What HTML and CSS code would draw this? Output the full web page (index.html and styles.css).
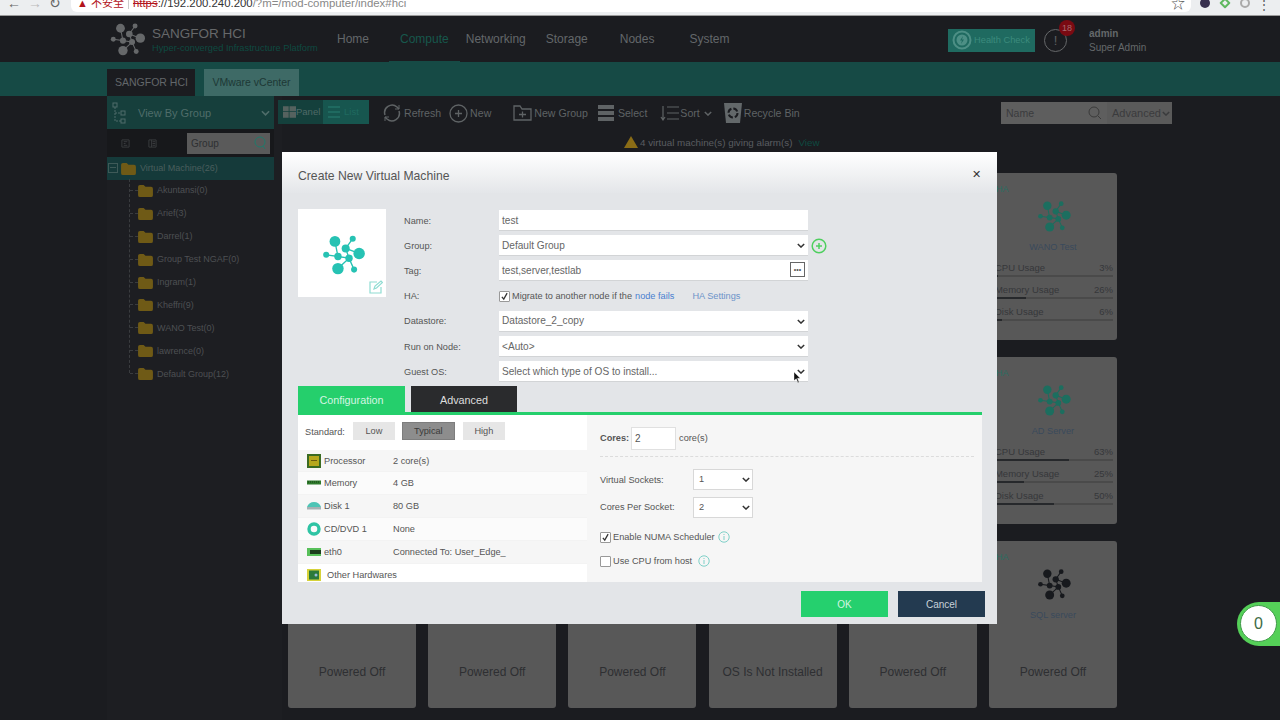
FILE: index.html
```html
<!DOCTYPE html>
<html lang="en">
<head>
    <meta charset="UTF-8">
    <title>SANGFOR HCI</title>
    <link rel="stylesheet" href="styles.css">
</head>
<body>
    <svg class="defs" width="0" height="0">
        <symbol id="logo" viewBox="0 0 127 122">
            <g stroke="currentColor" stroke-width="4" fill="none">
                <path d="M38 22L47 67L12 62M47 67L80 72L47 103M80 72L95 106M91 14L70 43L110 58M70 43L80 72"/>
            </g>
            <g fill="currentColor">
                <circle cx="38" cy="22" r="16"/><circle cx="91" cy="14" r="9"/><circle cx="70" cy="43" r="12"/>
                <circle cx="110" cy="58" r="17"/><circle cx="12" cy="62" r="9"/><circle cx="47" cy="67" r="11"/>
                <circle cx="80" cy="72" r="11"/><circle cx="47" cy="103" r="17"/><circle cx="95" cy="106" r="9"/>
            </g>
        </symbol>
        <symbol id="chev" viewBox="0 0 10 6">
            <path d="M1 1l4 4 4-4" fill="none" stroke="currentColor" stroke-width="1.8"/>
        </symbol>
        <symbol id="folder" viewBox="0 0 16 14">
            <path d="M0 3q0-2 2-2h4l2 2h6q2 0 2 2v7q0 2-2 2H2q-2 0-2-2z" fill="currentColor"/>
        </symbol>
        <symbol id="tick" viewBox="0 0 12 12">
            <path d="M2.5 6.5l2.5 3 4.5-8" fill="none" stroke="#333" stroke-width="1.7"/>
        </symbol>
        <symbol id="info" viewBox="0 0 12 12">
            <circle cx="6" cy="6" r="5.2" fill="none" stroke="currentColor"/>
            <path d="M6 3v1M6 5v4" stroke="currentColor"/>
        </symbol>
    </svg>

    <div class="browser-bar">
        <div class="nav-glyphs">
            <span>&#8592;</span>
            <span class="off">&#8594;</span>
            <span>&#8635;</span>
        </div>
        <div class="omnibox">
            <span class="warn">&#9650; 不安全</span>
            <span class="sep"></span>
            <span class="url"><s>https</s>://192.200.240.200<em>/?m=/mod-computer/index#hci</em></span>
            <span class="star">&#9734;</span>
        </div>
        <div class="ext">
            <span class="ext-a"></span>
            <span class="ext-b"></span>
            <span class="ext-c"></span>
            <span class="ext-d">&#8942;</span>
        </div>
    </div>

    <header class="topbar">
        <svg class="top-logo"><use href="#logo"/></svg>
        <div class="brand">
            <div class="brand-name">SANGFOR HCI</div>
            <div class="brand-sub">Hyper-converged Infrastructure Platform</div>
        </div>
        <nav class="mainnav">
            <a class="nav-home">Home</a>
            <a class="nav-compute active">Compute</a>
            <a class="nav-network">Networking</a>
            <a class="nav-storage">Storage</a>
            <a class="nav-nodes">Nodes</a>
            <a class="nav-system">System</a>
        </nav>
        <div class="top-right">
            <div class="health">
                <svg width="20" height="20" viewBox="0 0 20 20">
                    <circle cx="10" cy="10" r="8.5" fill="none" stroke="#4d8f85" stroke-width="2"/>
                    <circle cx="10" cy="10" r="5.5" fill="#4d8f85"/>
                    <path d="M11 6l-3 4.5h2L9 14l3-4.5h-2z" fill="#1f6a60"/>
                </svg>
                Health Check
            </div>
            <div class="alarm">!<span class="badge">18</span></div>
            <div class="user">
                <b>admin</b>
                <span>Super Admin</span>
            </div>
        </div>
    </header>

    <div class="band">
        <div class="tab on">SANGFOR HCI</div>
        <div class="tab">VMware vCenter</div>
    </div>

    <div class="workspace">
        <aside class="sidebar">
            <div class="viewby">
                <svg width="14" height="22" viewBox="0 0 14 22" fill="none" stroke="#4f6d6a">
                    <rect x="1" y="1" width="4" height="4"/><rect x="9" y="9" width="4" height="4"/><rect x="9" y="17" width="4" height="4"/>
                    <path d="M3 5v14h6M3 11h6" stroke-dasharray="2 1"/>
                </svg>
                <span>View By Group</span>
                <svg class="chev-s"><use href="#chev"/></svg>
            </div>
            <div class="side-tools">
                <svg class="mini" viewBox="0 0 10 10" fill="none" stroke="#3c3e41"><path d="M1 1h8v8H1zM3 3h4M3 5h2M3 7h4"/></svg>
                <svg class="mini" viewBox="0 0 10 10" fill="none" stroke="#3c3e41"><path d="M1 1h8v8H1zM4 1v8M5 3h3M5 5h3M5 7h3"/></svg>
                <div class="side-search">
                    Group
                    <svg width="12" height="14" viewBox="0 0 12 14" fill="none" stroke="#1f7a6b"><circle cx="6" cy="6" r="5"/><path d="M9 10l2 3"/></svg>
                </div>
            </div>
            <div class="tree">
                <div class="tree-root">
                    <span class="minus"></span>
                    <svg class="fold"><use href="#folder"/></svg>
                    Virtual Machine(26)
                </div>
                <ul class="tree-list">
                    <li><svg class="fold"><use href="#folder"/></svg>Akuntansi(0)</li>
                    <li><svg class="fold"><use href="#folder"/></svg>Arief(3)</li>
                    <li><svg class="fold"><use href="#folder"/></svg>Darrel(1)</li>
                    <li><svg class="fold"><use href="#folder"/></svg>Group Test NGAF(0)</li>
                    <li><svg class="fold"><use href="#folder"/></svg>Ingram(1)</li>
                    <li><svg class="fold"><use href="#folder"/></svg>Kheffri(9)</li>
                    <li><svg class="fold"><use href="#folder"/></svg>WANO Test(0)</li>
                    <li><svg class="fold"><use href="#folder"/></svg>lawrence(0)</li>
                    <li><svg class="fold"><use href="#folder"/></svg>Default Group(12)</li>
                </ul>
            </div>
        </aside>

        <main class="main">
            <div class="toolbar">
                <div class="toggle">
                    <span class="tg-panel">
                        <svg width="13" height="12" viewBox="0 0 16 14" fill="#55625f"><path d="M0 0h7v6H0zM8 0h8v6H8zM0 7h7v7H0zM8 7h8v7H8z"/></svg>
                        Panel
                    </span>
                    <span class="tg-list">
                        <svg width="12" height="14" viewBox="0 0 12 14" fill="none" stroke="#1f6a60" stroke-width="2"><path d="M0 2h12M0 7h12M0 12h12"/></svg>
                        List
                    </span>
                </div>
                <div class="tools">
                    <span class="tool t-refresh">
                        <svg width="20" height="20" viewBox="0 0 20 20" fill="none" stroke="#5f6365" stroke-width="1.5"><path d="M3 12A7.5 7.5 0 0 1 15 4l2 2M17 8a7.5 7.5 0 0 1-12 8l-2-2"/><path d="M17 2v4h-4M3 18v-4h4" stroke-width="1"/></svg>
                        Refresh
                    </span>
                    <span class="tool t-new">
                        <svg width="19" height="19" viewBox="0 0 19 19" fill="none" stroke="#5f6365" stroke-width="1.3"><circle cx="9.5" cy="9.5" r="8.5"/><path d="M6 9.5h7M9.5 6v7"/></svg>
                        New
                    </span>
                    <span class="tool t-group">
                        <svg width="19" height="16" viewBox="0 0 19 16" fill="none" stroke="#5f6365" stroke-width="1.3"><path d="M1 15V1h6l2 3h9v11zM6 9.5h7M9.5 6.5v6"/></svg>
                        New Group
                    </span>
                    <span class="tool t-select">
                        <svg width="16" height="16" viewBox="0 0 16 16" fill="#5f6365"><path d="M0 0h16v4H0zM0 6h16v4H0zM0 12h16v4H0z"/></svg>
                        Select
                    </span>
                    <span class="tool t-sort">
                        <svg width="19" height="16" viewBox="0 0 19 16" fill="none" stroke="#5f6365" stroke-width="1.2"><path d="M3 1v13M1 12l2 3 2-3M7 2h12M7 8h12M7 14h12"/></svg>
                        Sort
                        <svg class="chev-t"><use href="#chev"/></svg>
                    </span>
                    <span class="tool t-bin">
                        <svg width="18" height="20" viewBox="0 0 18 20"><path d="M0 0h18l-2 20H2z" fill="#63686a"/><circle cx="9" cy="10" r="4.5" fill="none" stroke="#1b1c20" stroke-width="2" stroke-dasharray="5 2"/></svg>
                        Recycle Bin
                    </span>
                </div>
                <div class="search">
                    <div class="search-name">
                        Name
                        <svg width="14" height="14" viewBox="0 0 14 14" fill="none" stroke="#3a3a3a"><circle cx="6" cy="6" r="5"/><path d="M10 10l3 3"/></svg>
                    </div>
                    <div class="search-adv">Advanced<svg class="chev-a"><use href="#chev"/></svg></div>
                </div>
            </div>
            <div class="notice">
                <svg width="14" height="12" viewBox="0 0 14 12"><path d="M7 0l7 12H0z" fill="#8a6c16"/></svg>
                4 virtual machine(s) giving alarm(s)
                <a>View</a>
            </div>
            <div class="cards">
                <div class="card"></div><div class="card"></div><div class="card"></div><div class="card"></div><div class="card"></div>
                <div class="card vm">
                    <span class="ha">HA</span>
                    <svg class="vm-logo"><use href="#logo"/></svg>
                    <div class="vm-name">WANO Test</div>
                    <div class="usage"><div class="usage-row"><span>CPU Usage</span><span>3%</span></div><div class="bar"><i class="fill" style="width:3%"></i></div></div>
                    <div class="usage"><div class="usage-row"><span>Memory Usage</span><span>26%</span></div><div class="bar"><i class="fill" style="width:26%"></i></div></div>
                    <div class="usage"><div class="usage-row"><span>Disk Usage</span><span>6%</span></div><div class="bar"><i class="fill" style="width:6%"></i></div></div>
                </div>
                <div class="card"></div><div class="card"></div><div class="card"></div><div class="card"></div><div class="card"></div>
                <div class="card vm">
                    <span class="ha">HA</span>
                    <svg class="vm-logo"><use href="#logo"/></svg>
                    <div class="vm-name">AD Server</div>
                    <div class="usage"><div class="usage-row"><span>CPU Usage</span><span>63%</span></div><div class="bar"><i class="fill" style="width:63%"></i></div></div>
                    <div class="usage"><div class="usage-row"><span>Memory Usage</span><span>25%</span></div><div class="bar"><i class="fill" style="width:25%"></i></div></div>
                    <div class="usage"><div class="usage-row"><span>Disk Usage</span><span>50%</span></div><div class="bar"><i class="fill" style="width:50%"></i></div></div>
                </div>
                <div class="card off"><p>Powered Off</p></div>
                <div class="card off"><p>Powered Off</p></div>
                <div class="card off"><p>Powered Off</p></div>
                <div class="card off"><p>OS Is Not Installed</p></div>
                <div class="card off"><p>Powered Off</p></div>
                <div class="card vm off">
                    <span class="ha">HA</span>
                    <svg class="vm-logo dark"><use href="#logo"/></svg>
                    <div class="vm-name">SQL server</div>
                    <p>Powered Off</p>
                </div>
            </div>
        </main>
    </div>

    <div class="counter"><span>0</span></div>

    <section class="modal">
        <div class="modal-head">
            <h2>Create New Virtual Machine</h2>
            <span class="close">&#10005;</span>
        </div>
        <div class="modal-body">
            <div class="top-form">
                <div class="icon-box">
                    <svg class="vm-icon"><use href="#logo"/></svg>
                    <svg class="edit" width="14" height="14" viewBox="0 0 14 14" fill="none" stroke="#8fdcd2" stroke-width="1.2"><path d="M12 7v6H1V2h7"/><path d="M5 9l1-3 6-5 1.5 1.5-6 5.5z"/></svg>
                </div>
                <div class="form">
                    <div class="form-row"><label>Name:</label><div class="field">test</div></div>
                    <div class="form-row">
                        <label>Group:</label>
                        <div class="field">Default Group<svg class="chev"><use href="#chev"/></svg></div>
                        <svg class="add" width="16" height="16" viewBox="0 0 16 16" fill="none" stroke="#4fcf5f" stroke-width="1.5"><circle cx="8" cy="8" r="6.8"/><path d="M5 8h6M8 5v6"/></svg>
                    </div>
                    <div class="form-row"><label>Tag:</label><div class="field">test,server,testlab<span class="more">&#8226;&#8226;&#8226;</span></div></div>
                    <div class="form-row">
                        <label>HA:</label>
                        <div class="ha-line">
                            <span class="check on"><svg><use href="#tick"/></svg></span>
                            <span>Migrate to another node if the</span>
                            <a class="link">node fails</a>
                            <a class="link ha-link">HA Settings</a>
                        </div>
                    </div>
                    <div class="form-row"><label>Datastore:</label><div class="field">Datastore_2_copy<svg class="chev"><use href="#chev"/></svg></div></div>
                    <div class="form-row"><label>Run on Node:</label><div class="field">&lt;Auto&gt;<svg class="chev"><use href="#chev"/></svg></div></div>
                    <div class="form-row">
                        <label>Guest OS:</label>
                        <div class="field">Select which type of OS to install...<svg class="chev"><use href="#chev"/></svg>
                            <svg class="cursor" width="7" height="11" viewBox="0 0 9 14"><path d="M0 0l8 8H4.5l2 5-1.5.6-2-5L0 11z" fill="#111" stroke="#fff" stroke-width=".5"/></svg>
                        </div>
                    </div>
                </div>
            </div>
            <div class="tabs">
                <div class="mtab green">Configuration</div>
                <div class="mtab black">Advanced</div>
            </div>
            <div class="config">
                <div class="hw">
                    <div class="standard">
                        Standard:
                        <span class="std">Low</span>
                        <span class="std sel">Typical</span>
                        <span class="std">High</span>
                    </div>
                    <div class="hw-row">
                        <svg class="hw-ico" viewBox="0 0 14 14"><rect width="14" height="14" fill="#3a6b22"/><rect x="2" y="2" width="10" height="10" fill="#b6a81e"/><path d="M4 6.5h6" stroke="#6b5d10"/></svg>
                        <span class="hw-label">Processor</span><span>2 core(s)</span>
                    </div>
                    <div class="hw-row">
                        <svg class="hw-ico" viewBox="0 0 14 14"><rect y="4.5" width="14" height="4" fill="#2f7a2c"/><path d="M1 6h12" stroke="#163c14" stroke-dasharray="1 1"/></svg>
                        <span class="hw-label">Memory</span><span>4 GB</span>
                    </div>
                    <div class="hw-row">
                        <svg class="hw-ico" viewBox="0 0 14 14"><path d="M0 8q2-5 7-5t7 5z" fill="#4ec4b5"/><rect y="8" width="14" height="2.5" fill="#a7b1b3"/></svg>
                        <span class="hw-label">Disk 1</span><span>80 GB</span>
                    </div>
                    <div class="hw-row">
                        <svg class="hw-ico" viewBox="0 0 14 14"><circle cx="7" cy="7" r="5" fill="none" stroke="#2fc4a4" stroke-width="3.4"/></svg>
                        <span class="hw-label">CD/DVD 1</span><span>None</span>
                    </div>
                    <div class="hw-row">
                        <svg class="hw-ico" viewBox="0 0 14 14"><rect y="3" width="14" height="8" fill="#58c05a"/><rect x="3" y="5" width="11" height="4" fill="#1b3d1c"/></svg>
                        <span class="hw-label">eth0</span><span>Connected To: User_Edge_</span>
                    </div>
                    <div class="hw-row other">
                        <svg class="hw-ico" viewBox="0 0 14 14"><rect y="1" width="14" height="12" fill="#d6d23a"/><rect x="2" y="2.5" width="10" height="9" fill="#2c7a3a"/><circle cx="9" cy="7" r="1.5" fill="#9bd"/></svg>
                        <span>Other Hardwares</span>
                    </div>
                </div>
                <div class="detail">
                    <div class="cores">
                        <b>Cores:</b><span class="cores-input">2</span><span class="cores-unit">core(s)</span>
                    </div>
                    <div class="detail-row"><label>Virtual Sockets:</label><div class="mini-select">1<svg class="chev"><use href="#chev"/></svg></div></div>
                    <div class="detail-row"><label>Cores Per Socket:</label><div class="mini-select">2<svg class="chev"><use href="#chev"/></svg></div></div>
                    <div class="opt numa">
                        <span class="check on"><svg><use href="#tick"/></svg></span>
                        Enable NUMA Scheduler
                        <svg class="tip"><use href="#info"/></svg>
                    </div>
                    <div class="opt host">
                        <span class="check"></span>
                        Use CPU from host
                        <svg class="tip far"><use href="#info"/></svg>
                    </div>
                </div>
            </div>
        </div>
        <div class="modal-foot">
            <button class="btn ok">OK</button>
            <button class="btn cancel">Cancel</button>
        </div>
    </section>
</body>
</html>
```

FILE: styles.css
```css
:root {
    --page: #1b1c20;
    --dim-text: #64686a;
    --card: #585858;
    --teal: #164a45;
    --green: #25cf6c;
}

* {
    box-sizing: border-box;
}

html, body {
    margin: 0;
    height: 720px;
    overflow: hidden;
}

body {
    position: relative;
    background: var(--page);
    color: var(--dim-text);
    font-family: "Liberation Sans", "Noto Sans CJK SC", sans-serif;
    font-size: 11px;
    display: flex;
    flex-direction: column;
}

.defs {
    position: absolute;
}

/* browser chrome, cropped at the top */
.browser-bar {
    flex: none;
    height: 16px;
    background: #eceef0;
    border-bottom: 1px solid #9a9a9a;
    display: flex;
    align-items: flex-end;
    padding: 0 9px 3px 0;
    overflow: hidden;
}

.nav-glyphs {
    width: 71px;
    height: 12px;
    display: flex;
    padding-left: 7px;
    font-size: 14px;
    line-height: 7px;
    color: #666;
}

.nav-glyphs span {
    width: 21px;
}

.nav-glyphs .off {
    color: #bbb;
}

.omnibox {
    flex: none;
    width: 1120px;
    height: 12px;
    background: #fff;
    border-radius: 0 0 6px 6px;
    display: flex;
    align-items: flex-end;
    padding: 0 6px 3px 6px;
    font-size: 11.4px;
    line-height: 12px;
    white-space: nowrap;
}

.warn {
    color: #b3141c;
    font-size: 11px;
}

.sep {
    width: 1px;
    height: 10px;
    background: #ccc;
    margin: 0 4px;
}

.url {
    color: #333;
}

.url s {
    color: #b3141c;
}

.url em {
    font-style: normal;
    color: #888;
}

.star {
    margin-left: auto;
    color: #555;
    font-size: 14px;
}

.ext {
    display: flex;
    align-items: center;
    gap: 11px;
    margin-left: 9px;
    height: 12px;
}

.ext span {
    width: 10px;
    height: 10px;
    border-radius: 50%;
    margin-top: -6px;
}

.ext-a { background: #38304f; }
.ext-b { border: 2px solid #5fb85f; transform: rotate(45deg); border-radius: 1px !important; width: 8px !important; height: 8px !important; }
.ext-c { border: 2px solid #aaa; }
.ext-d { color: #555; font-size: 12px; margin-left: -3px; }

/* main header */
.topbar {
    flex: none;
    height: 46px;
    display: flex;
    align-items: center;
    padding: 0 0 0 110px;
}

.top-logo {
    width: 35px;
    height: 34px;
    color: #66686a;
}

.brand {
    margin-left: 7px;
    width: 185px;
}

.brand-name {
    font-size: 13.5px;
    color: #66686a;
    line-height: 16px;
}

.brand-sub {
    font-size: 9.3px;
    color: #0e4a40;
    margin-top: 1px;
    white-space: nowrap;
}

.mainnav {
    display: flex;
    height: 100%;
    font-size: 12px;
    align-items: center;
}

.mainnav a {
    color: #63676a;
    white-space: nowrap;
    line-height: 46px;
    height: 46px;
}

.nav-network { margin-left: 18px; }
.nav-storage { margin-left: 20px; }
.nav-nodes { margin-left: 32px; }
.nav-system { margin-left: 35px; }

.mainnav a.active {
    color: #17574c;
    padding: 0 11px;
    margin-left: 20px;
    margin-right: -12px;
    border-bottom: 1px solid var(--teal);
}

.top-right {
    margin-left: auto;
    margin-right: 131px;
    margin-top: 2px;
    display: flex;
    align-items: center;
}

.health {
    width: 87px;
    height: 23px;
    background: #1f6a60;
    color: #3c8a7d;
    display: flex;
    align-items: center;
    gap: 2px;
    padding-left: 4px;
    font-size: 9.3px;
    white-space: nowrap;
    margin-right: 9px;
}

.alarm {
    position: relative;
    width: 23px;
    height: 23px;
    border: 1px solid #66686a;
    border-radius: 50%;
    text-align: center;
    line-height: 21px;
    font-size: 13px;
    color: #5d6062;
}

.badge {
    position: absolute;
    left: 14px;
    top: -10px;
    width: 16px;
    height: 16px;
    border-radius: 50%;
    background: #7a0a12;
    color: #a5696d;
    font-size: 9px;
    line-height: 16px;
}

.user {
    margin-left: 22px;
    display: flex;
    flex-direction: column;
    gap: 3px;
    font-size: 10px;
    line-height: 11px;
    width: 60px;
    white-space: nowrap;
}

/* tab band */
.band {
    flex: none;
    height: 34px;
    background: var(--teal);
    display: flex;
    align-items: flex-end;
    padding-left: 107px;
    gap: 9px;
}

.tab {
    height: 27px;
    width: 95px;
    line-height: 27px;
    text-align: center;
    background: #3e6a66;
    color: #1d3835;
    font-size: 10.5px;
}

.tab.on {
    width: 88px;
    background: var(--page);
    color: #63676a;
    padding-left: 1px;
}

/* workspace */
.workspace {
    flex: 1;
    display: flex;
    padding-left: 107px;
    min-height: 0;
}

.sidebar {
    width: 175px;
    background: #1d1e22;
    flex: none;
}

.viewby {
    width: 167px;
    height: 33px;
    background: #163f3c;
    display: flex;
    align-items: center;
    padding: 0 4px 0 5px;
    gap: 12px;
    font-size: 11px;
    color: #4f6d6a;
}

.chev-s {
    width: 9px;
    height: 6px;
    margin-left: auto;
    color: #4f6d6a;
}

.side-tools {
    width: 167px;
    height: 28px;
    background: #17181b;
    display: flex;
    align-items: center;
    padding: 0 4px 0 14px;
}

.mini {
    width: 9px;
    height: 9px;
    margin-right: 18px;
}

.side-search {
    margin-left: auto;
    width: 83px;
    height: 21px;
    background: #5a5a5a;
    display: flex;
    align-items: center;
    justify-content: space-between;
    padding: 0 4px;
    font-size: 10px;
    color: #2e3032;
}

.tree-root {
    width: 167px;
    height: 23px;
    background: #153a3a;
    display: flex;
    align-items: center;
    padding: 0 0 1px 1px;
    font-size: 9px;
    color: #4a5e5d;
}

.minus {
    width: 10px;
    height: 10px;
    border: 1px solid #3e5a58;
    margin-right: 3px;
    position: relative;
}

.minus:after {
    content: "";
    position: absolute;
    left: 1px;
    right: 1px;
    top: 3px;
    height: 1px;
    background: #3e5a58;
}

.fold {
    width: 15px;
    height: 13px;
    color: #6f5a16;
    margin-right: 4px;
    flex: none;
}

.tree-list {
    list-style: none;
    margin: -1px 0 0 22px;
    padding: 0;
    border-left: 1px dashed #3a3c3f;
    height: 194px;
}

.tree-list li {
    height: 22.9px;
    display: flex;
    align-items: center;
    padding-left: 8px;
    font-size: 9px;
    color: #4d5053;
    position: relative;
    white-space: nowrap;
}

.tree-list li:before {
    content: "";
    position: absolute;
    left: 0;
    top: 11px;
    width: 8px;
    border-top: 1px dashed #3a3c3f;
}

.main {
    flex: none;
    width: 890px;
    margin-left: -4px;
    position: relative;
}

.toolbar {
    height: 33px;
    display: flex;
    align-items: center;
    padding-top: 1px;
}

.toggle {
    display: flex;
    height: 24px;
    width: 91px;
    background: #14403c;
    font-size: 9.5px;
    color: #4f6a68;
    margin-top: -3px;
}

.toggle span {
    display: flex;
    align-items: center;
    padding-left: 5px;
}

.tg-panel { width: 45px; }
.tg-list { width: 46px; background: #17564f; color: #1f6a60; gap: 4px; }

.tools {
    display: flex;
    align-items: center;
    font-size: 10.6px;
    color: #5f6365;
    white-space: nowrap;
}

.tool {
    display: flex;
    align-items: center;
    gap: 2px;
}

.t-refresh { margin-left: 13px; }
.t-new { margin-left: 8px; }
.t-group { margin-left: 22px; }
.t-select { margin-left: 10px; gap: 4px; }
.t-sort { margin-left: 13px; gap: 1px; }
.t-bin { margin-left: 12px; }

.chev-t {
    width: 8px;
    height: 5px;
    margin-left: 3px;
}

.search {
    position: absolute;
    left: 723px;
    top: 6px;
    width: 171px;
    height: 22px;
    display: flex;
    background: #5a5a5a;
    color: #3a3b3d;
    font-size: 11px;
}

.search-name {
    width: 106px;
    background: #5e5e5e;
    display: flex;
    align-items: center;
    justify-content: space-between;
    padding: 0 5px;
    font-size: 10.5px;
}

.search-adv {
    flex: 1;
    display: flex;
    align-items: center;
    padding-left: 5px;
    gap: 1px;
    white-space: nowrap;
}

.chev-a {
    width: 8px;
    height: 5px;
}

.notice {
    height: 26px;
    display: flex;
    align-items: center;
    padding-left: 346px;
    gap: 2px;
    font-size: 9.8px;
    color: #5a5d60;
    white-space: nowrap;
}

.notice a {
    color: #0e4a40;
    margin-left: 4px;
}

.cards {
    margin-top: 18px;
    margin-left: 10px;
    display: grid;
    grid-template-columns: repeat(6, 128px);
    grid-auto-rows: 167px;
    column-gap: 12.2px;
    row-gap: 17px;
}

.card {
    background: var(--card);
    border-radius: 3px;
    position: relative;
    color: #2e2f32;
}

.card p {
    margin: 0;
    position: absolute;
    left: 0;
    right: 0;
    top: 124px;
    text-align: center;
    font-size: 12px;
    line-height: 14px;
    white-space: nowrap;
}

.vm {
    padding: 11px 4px 0 6px;
    display: flex;
    flex-direction: column;
    align-items: stretch;
}

.ha {
    font-size: 9px;
    line-height: 10px;
    color: #2c6d62;
    padding-left: 1px;
}

.vm-logo {
    width: 36px;
    height: 32px;
    margin: 6px 0 0 41px;
    color: #1c6e5f;
}

.vm-logo.dark {
    color: #17191d;
}

.vm-name {
    text-align: center;
    margin: 9px 0 0 -2px;
    font-size: 9.2px;
    line-height: 12px;
    color: #3a4a5c;
}

.usage {
    margin-top: 9px;
    height: 13px;
    position: relative;
    font-size: 9.5px;
    color: #36373a;
    line-height: 11px;
}

.usage-row {
    display: flex;
    justify-content: space-between;
    white-space: nowrap;
}

.bar {
    height: 1.5px;
    margin-top: 2px;
    background: #4a4a4a;
}

.fill {
    display: block;
    height: 100%;
    background: #26282b;
}

.counter {
    position: absolute;
    right: 0;
    top: 602px;
    width: 43px;
    height: 44px;
    background: #55d058;
    border-radius: 22px 0 0 22px;
    padding: 3px 0 0 3px;
}

.counter span {
    display: block;
    width: 37px;
    height: 37px;
    background: #fff;
    border: 1px solid #3f9a48;
    border-radius: 50%;
    text-align: center;
    line-height: 36px;
    font-size: 16px;
    color: #3e6b45;
}

/* modal */
.modal {
    position: absolute;
    left: 282px;
    top: 152px;
    width: 715px;
    height: 472px;
    background: #e3e5e8;
    color: #555;
    display: flex;
    flex-direction: column;
    font-size: 9.2px;
}

.modal-head {
    flex: none;
    height: 41px;
    background: linear-gradient(180deg, #ffffff 0%, #e4e6e9 100%);
    display: flex;
    align-items: center;
    justify-content: space-between;
    padding: 7px 16px 0;
}

.modal-head h2 {
    margin: 0;
    font-size: 12.2px;
    font-weight: normal;
    color: #555;
}

.close {
    font-size: 11px;
    color: #333;
    margin-top: -4px;
}

.modal-body {
    flex: 1;
    min-height: 0;
    padding: 16px 15px 0 16px;
}

.top-form {
    display: flex;
    height: 177px;
}

.icon-box {
    position: relative;
    width: 88px;
    height: 88px;
    background: #fff;
    flex: none;
    display: flex;
    align-items: center;
    justify-content: center;
}

.vm-icon {
    width: 43px;
    height: 41px;
    color: #26c2b3;
    margin-left: 3px;
    margin-top: 2px;
}

.edit {
    position: absolute;
    right: 3px;
    bottom: 3px;
}

.form {
    margin: -1px 0 0 18px;
    flex: 1;
}

.form-row {
    display: flex;
    align-items: center;
    height: 25.2px;
    white-space: nowrap;
}

.form-row label {
    width: 95px;
    flex: none;
}

.field {
    position: relative;
    width: 309px;
    height: 21px;
    background: #fff;
    border-bottom: 1px solid #d2d4d6;
    display: flex;
    align-items: center;
    padding-left: 3px;
    font-size: 10.1px;
    color: #666;
}

.chev {
    position: absolute;
    right: 3px;
    top: 8px;
    width: 8px;
    height: 5px;
    color: #333;
}

.add {
    margin-left: 3px;
}

.more {
    position: absolute;
    right: 3px;
    top: 2px;
    width: 15px;
    height: 15px;
    border: 1px solid #666;
    font-size: 7px;
    line-height: 13px;
    text-align: center;
    color: #555;
}

.cursor {
    position: absolute;
    right: 7px;
    top: 11px;
    overflow: visible;
}

.ha-line {
    display: flex;
    align-items: center;
    white-space: nowrap;
}

.check {
    display: inline-block;
    flex: none;
    width: 11px;
    height: 11px;
    background: #fff;
    border: 1px solid #999;
    border-radius: 1px;
    margin-right: 2px;
    position: relative;
}

.check svg {
    position: absolute;
    left: 0;
    top: 0;
    width: 9px;
    height: 9px;
}

.link {
    color: #4a7fd0;
    margin-left: 3px;
}

.ha-link {
    color: #6c93c8;
    margin-left: 18px;
}

.tabs {
    display: flex;
    height: 26px;
    gap: 6px;
}

.mtab {
    width: 107px;
    line-height: 29px;
    height: 26px;
    text-align: center;
    font-size: 10.8px;
}

.mtab.green {
    background: var(--green);
    color: #d4f5e2;
}

.mtab.black {
    width: 106px;
    background: #2a2b2d;
    color: #ddd;
}

.config {
    display: flex;
    height: 170px;
    border-top: 3px solid var(--green);
    overflow: hidden;
}

.hw {
    width: 289px;
    background: #fff;
    flex: none;
}

.standard {
    height: 34.6px;
    display: flex;
    align-items: center;
    padding-left: 7px;
}

.std {
    width: 42px;
    height: 18px;
    background: #e6e6e6;
    text-align: center;
    line-height: 18px;
    margin-left: 8px;
    margin-top: -3px;
}

.std.sel {
    width: 53px;
    margin-left: 7px;
    background: #8d8d8d;
    border: 1px solid #7d7d7d;
    color: #3a3a3a;
    line-height: 16px;
}

.hw-row {
    height: 22.9px;
    display: flex;
    align-items: center;
    padding-left: 9px;
    background: #fbfbfb;
    border-bottom: 1px solid #f3f3f3;
    white-space: nowrap;
}

.hw-row:nth-child(even) {
    background: #f6f6f6;
}

.hw-ico {
    width: 14px;
    height: 14px;
    margin-right: 3px;
    flex: none;
}

.hw-label {
    width: 69px;
    flex: none;
}

.other {
    background: #fff !important;
    border: 0;
}

.other .hw-ico {
    margin-right: 6px;
}

.detail {
    flex: 1;
    background: #f6f6f6;
    padding: 0 8px 0 13px;
}

.cores {
    height: 42px;
    display: flex;
    align-items: center;
    border-bottom: 1px dashed #dcdcdc;
    margin-bottom: 9px;
    padding: 12px 0 7px;
}

.cores b {
    font-weight: bold;
    color: #555;
}

.cores-input {
    flex: none;
    width: 45px;
    height: 23px;
    background: #fff;
    border: 1px solid #e0e0e0;
    margin-left: 2px;
    padding-left: 3px;
    line-height: 22px;
    font-size: 10px;
}

.cores-unit {
    margin-left: 3px;
}

.detail-row {
    display: flex;
    align-items: center;
    height: 27.5px;
}

.detail-row label {
    width: 93px;
}

.mini-select {
    position: relative;
    width: 60px;
    height: 21px;
    background: #fff;
    border: 1px solid #d8d8d8;
    line-height: 19px;
    padding-left: 5px;
}

.mini-select .chev {
    right: 2px;
    top: 7px;
}

.opt {
    display: flex;
    align-items: center;
    height: 24px;
}

.numa {
    margin-top: 4px;
}

.tip {
    width: 12px;
    height: 12px;
    color: #7fd0c8;
    margin-left: 3px;
}

.tip.far {
    margin-left: 6px;
}

.modal-foot {
    flex: none;
    height: 42px;
    display: flex;
    justify-content: flex-end;
    gap: 10px;
    padding: 9px 12px 0 0;
}

.btn {
    width: 87px;
    height: 26px;
    border: 0;
    font: 10px "Liberation Sans", sans-serif;
    padding: 0;
}

.ok {
    background: #25d06e;
    color: #d4f5e2;
}

.cancel {
    background: #233a50;
    color: #c8d2da;
}
```
